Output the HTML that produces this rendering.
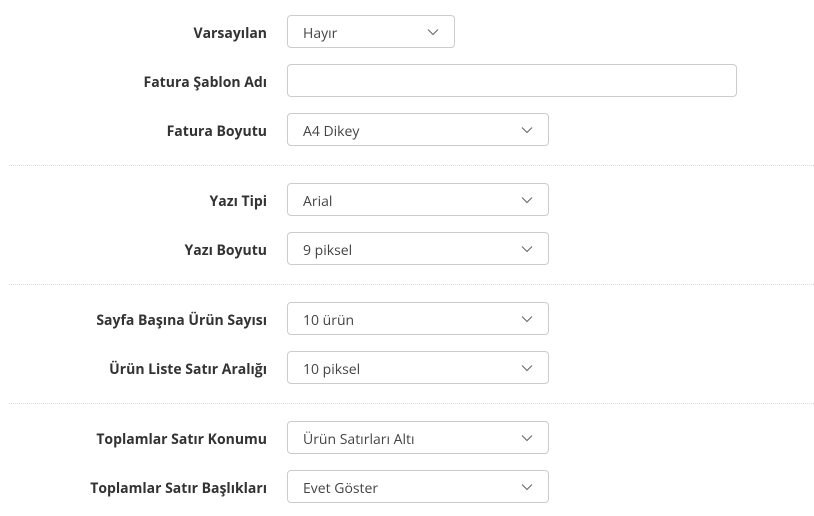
<!DOCTYPE html><html><head><style>
body{margin:0;width:814px;height:516px;background:#fff;font-family:"Open Sans","DejaVu Sans","Liberation Sans",sans-serif;position:relative;overflow:hidden}
.l{position:absolute;right:547px;font-weight:bold;font-size:14px;color:#333;line-height:20px;white-space:nowrap;margin-top:2px}
.b{position:absolute;left:287px;height:31px;border:1px solid #ccc;border-radius:4px;box-sizing:content-box}
.b span{position:absolute;left:15px;top:8px;font-size:14px;color:#444;line-height:20px}
.b svg{position:absolute;right:15px;top:12px}
.s{position:absolute;left:9px;width:805px;border-top:1px dotted #ddd}
</style></head><body>
<div class="l" style="top:22px">Varsayılan</div>
<div class="b" style="top:15px;width:166px"><span>Hayır</span><svg width="12" height="8"><path d="M1 1.5 6 6.5 11 1.5" fill="none" stroke="#666" stroke-width="1.1"/></svg></div>
<div class="l" style="top:71px">Fatura Şablon Adı</div>
<div class="b" style="top:64px;width:448px"></div>
<div class="l" style="top:120px">Fatura Boyutu</div>
<div class="b" style="top:113px;width:260px"><span>A4 Dikey</span><svg width="12" height="8"><path d="M1 1.5 6 6.5 11 1.5" fill="none" stroke="#666" stroke-width="1.1"/></svg></div>
<div class="s" style="top:165px"></div>
<div class="l" style="top:190px">Yazı Tipi</div>
<div class="b" style="top:183px;width:260px"><span>Arial</span><svg width="12" height="8"><path d="M1 1.5 6 6.5 11 1.5" fill="none" stroke="#666" stroke-width="1.1"/></svg></div>
<div class="l" style="top:239px">Yazı Boyutu</div>
<div class="b" style="top:232px;width:260px"><span>9 piksel</span><svg width="12" height="8"><path d="M1 1.5 6 6.5 11 1.5" fill="none" stroke="#666" stroke-width="1.1"/></svg></div>
<div class="s" style="top:284px"></div>
<div class="l" style="top:309px">Sayfa Başına Ürün Sayısı</div>
<div class="b" style="top:302px;width:260px"><span>10 ürün</span><svg width="12" height="8"><path d="M1 1.5 6 6.5 11 1.5" fill="none" stroke="#666" stroke-width="1.1"/></svg></div>
<div class="l" style="top:358px">Ürün Liste Satır Aralığı</div>
<div class="b" style="top:351px;width:260px"><span>10 piksel</span><svg width="12" height="8"><path d="M1 1.5 6 6.5 11 1.5" fill="none" stroke="#666" stroke-width="1.1"/></svg></div>
<div class="s" style="top:403px"></div>
<div class="l" style="top:428px">Toplamlar Satır Konumu</div>
<div class="b" style="top:421px;width:260px"><span>Ürün Satırları Altı</span><svg width="12" height="8"><path d="M1 1.5 6 6.5 11 1.5" fill="none" stroke="#666" stroke-width="1.1"/></svg></div>
<div class="l" style="top:477px">Toplamlar Satır Başlıkları</div>
<div class="b" style="top:470px;width:260px"><span>Evet Göster</span><svg width="12" height="8"><path d="M1 1.5 6 6.5 11 1.5" fill="none" stroke="#666" stroke-width="1.1"/></svg></div>
</body></html>
